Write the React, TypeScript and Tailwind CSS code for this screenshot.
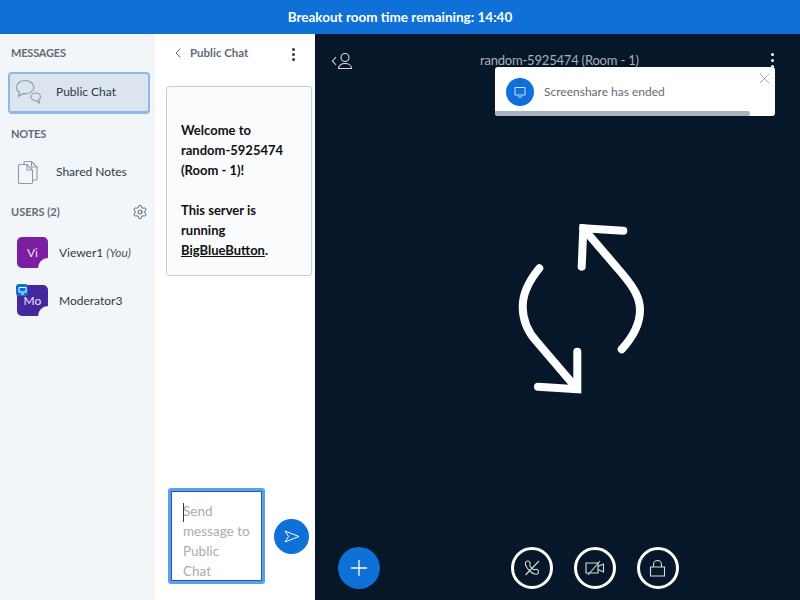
import { ChevronLeft, Plus, Settings, X } from 'lucide-react';

const FONT = "font-['Lato','Noto_Sans',sans-serif]";

function ChatIcon() {
  return (
    <svg width="28" height="26" viewBox="0 0 28 26" fill="none" stroke="#8b9aa8" strokeWidth="1.1">
      <path d="M10 1.5c5 0 8.800 3 8.800 6.700s-3.800 6.700-8.800 6.700c-.8 0-1.500 0-2.200-.2L3.500 17.500l1-4.200C2.600 12 1.500 10.200 1.500 8.200 1.500 4.500 5.200 1.500 10 1.500z" />
      <path d="M20.500 14c2.800 0 5 1.600 5 3.700 0 1.200-.7 2.200-1.800 2.900l.6 3.400-3.200-2.400c-2.800 0-5-1.700-5-3.900 0-2 2-3.700 4.400-3.700z" />
    </svg>
  );
}

function NotesIcon() {
  return (
    <svg width="22" height="25" viewBox="0 0 22 25" fill="none" stroke="#8b9aa8" strokeWidth="1.1">
      <path d="M7 4V2.500C7 1.900 7.500 1.500 8 1.500h6.500l5.500 5.500v12c0 .6-.4 1-1 1h-3" />
      <path d="M14.500 1.500V7H20" />
      <path d="M2.500 4.500H10l5.500 5.500v12.500c0 .6-.4 1-1 1h-12c-.6 0-1-.4-1-1v-17c0-.6.400-1 1-1z" />
      <path d="M10 4.500V10h5.500" />
    </svg>
  );
}

function Avatar({ label, color, presenter }: { label: string; color: string; presenter?: boolean }) {
  return (
    <div className={`relative flex h-[31px] w-[31px] items-center justify-center overflow-visible rounded-[5px] text-[12px] text-[#e8e0f0] ${color}`}>
      {label}
      <span className="absolute bottom-0 right-0 h-[10px] w-[10px] rounded-tl-full bg-[#f3f6f9]" />
      {presenter && (
        <span className="absolute -left-[1px] -top-[1px] flex h-[12px] w-[12px] items-center justify-center rounded-[3px] bg-[#0f70d7]">
          <svg width="9" height="9" viewBox="0 0 9 9" fill="none" stroke="#fff" strokeWidth="1">
            <path d="M1 1.500h7v4.500H1z" />
            <path d="M3 8h3" />
          </svg>
        </span>
      )}
    </div>
  );
}

function RoundButton({ children }: { children: React.ReactNode }) {
  return (
    <button className="flex h-[42px] w-[42px] items-center justify-center rounded-full border-[3px] border-white bg-transparent">
      {children}
    </button>
  );
}

function Kebab({ color, gap }: { color: string; gap: string }) {
  return (
    <div className={`flex flex-col ${gap}`}>
      <span className={`h-[3px] w-[3px] rounded-full ${color}`} />
      <span className={`h-[3px] w-[3px] rounded-full ${color}`} />
      <span className={`h-[3px] w-[3px] rounded-full ${color}`} />
    </div>
  );
}

export default function App() {
  return (
    <div className={`flex h-[600px] w-[800px] flex-col overflow-hidden ${FONT}`}>
      <div className="flex h-[34px] shrink-0 items-center justify-center bg-[#0f70d7] text-[13.5px] font-bold text-white">
        Breakout room time remaining: 14:40
      </div>

      <div className="flex min-h-0 flex-1">
        {/* user list */}
        <div className="flex w-[155px] shrink-0 flex-col bg-[#f3f6f9] pt-[11px] text-[12px] text-[#2d3a47]">
          <h2 className="pl-[11px] text-[11px] font-bold leading-[15px] tracking-[-0.2px] text-[#5f6b78]">MESSAGES</h2>
          <div className="ml-[8px] mt-[12px] flex h-[42px] w-[142px] items-center rounded-[4px] border-2 border-b-[3px] border-[#8cb8ea] bg-[#dce4ed] pb-[1px] pl-[5px]">
            <ChatIcon />
            <span className="ml-[13px]">Public Chat</span>
          </div>
          <h2 className="mt-[12px] pl-[11px] text-[11px] font-bold leading-[15px] tracking-[-0.2px] text-[#5f6b78]">NOTES</h2>
          <div className="mt-[18px] flex h-[26px] items-center pl-[17px]">
            <NotesIcon />
            <span className="ml-[17px]">Shared Notes</span>
          </div>
          <div className="mt-[18px] flex h-[18px] items-center justify-between pl-[11px] pr-[7px]">
            <h2 className="text-[11px] font-bold text-[#5f6b78]">USERS (2)</h2>
            <Settings size={16} strokeWidth={1.3} color="#3e4b58" />
          </div>
          <div className="mt-[16px] flex items-center pl-[17px]">
            <Avatar label="Vi" color="bg-[#7b1fa2]" />
            <span className="ml-[11px]">
              Viewer1 <em className="text-[#4a5663]">(You)</em>
            </span>
          </div>
          <div className="mt-[17px] flex items-center pl-[17px]">
            <Avatar label="Mo" color="bg-[#4527a0]" presenter />
            <span className="ml-[11px]">Moderator3</span>
          </div>
        </div>

        {/* chat */}
        <div className="flex w-[160px] shrink-0 flex-col bg-white">
          <div className="flex h-[52px] shrink-0 items-start pl-[15px] pr-[20px] pt-[11px]">
            <ChevronLeft size={16} strokeWidth={1.5} color="#5f6b78" />
            <span className="ml-[4px] text-[11.5px] font-bold leading-[16px] text-[#5f6b78]">Public Chat</span>
            <div className="ml-auto mt-[3px]">
              <Kebab color="bg-[#2d3a47]" gap="gap-[2px]" />
            </div>
          </div>
          <div className="ml-[11px] h-[190px] w-[146px] rounded-[3px] border border-[#c5ced8] bg-[#fafbfc] px-[14px] pt-[33px] text-[13px] font-bold leading-[20px] text-[#111]">
            <p>Welcome to random-5925474 (Room - 1)!</p>
            <p className="mt-[20px]">
              This server is running <u>BigBlueButton</u>.
            </p>
          </div>
          <div className="mt-auto flex items-center pb-[16px] pl-[13px]">
            <div className="h-[96px] w-[97px] overflow-hidden rounded-[3px] border-[3px] border-[#5ba0ea] bg-white">
              <div className="relative h-full border border-[#1a5fae] pl-[11px] pt-[9px] text-[13.5px] leading-[20px] text-[#a5adb6]">
                <span className="absolute left-[11px] top-[11px] h-[19px] w-[1px] bg-[#2d3a47]" />
                Send
                <br />
                message to
                <br />
                Public
                <br />
                Chat
              </div>
            </div>
            <button className="ml-[9px] flex h-[35px] w-[35px] items-center justify-center rounded-full bg-[#0f70d7]">
              <svg width="16" height="13" viewBox="0 0 16 13" fill="none" stroke="#fff" strokeWidth="1">
                <path d="M1 1l14 5.500L1 12l3.500-5.500L1 1z" />
              </svg>
            </button>
          </div>
        </div>

        {/* presentation */}
        <div className="relative flex min-w-0 flex-1 flex-col bg-[#06172a]">
          <div className="flex h-[54px] shrink-0 items-center pl-[16px] pr-[26px]">
            <svg width="22" height="18" viewBox="0 0 22 18" fill="none" stroke="#d7dce2" strokeWidth="1.100">
              <path d="M5 5L1.500 9 5 13" />
              <circle cx="14" cy="5.500" r="4" />
              <path d="M7.500 16.500c0-3 2.800-5 6.500-5s6.500 2 6.500 5z" />
            </svg>
            <span className="ml-[127px] text-[13px] tracking-[-0.2px] text-[#a9b1ba]">random-5925474 (Room - 1)</span>
            <div className="ml-auto mt-[-1px]">
              <Kebab color="bg-white" gap="gap-[3px]" />
            </div>
          </div>

          <div className="flex min-h-0 flex-1 items-center justify-center">
            <svg width="130" height="173" viewBox="515 222 130 173" fill="none" stroke="#fff" strokeWidth="8" strokeLinecap="round" className="ml-[45px] mt-[-18px]">
              <path d="M581.700 266.700L583.300 228.300L623.300 230.700" />
              <path d="M583.300 228.300L623.300 275C634 288 640 298 640 310C640 325 633 337 621.700 349.300" />
              <path d="M539.300 268.300C528 282 522.700 295 522.700 306.700C522.700 320 528 332 536.700 341.700L576.700 388.300" />
              <path d="M538 386.700L577.300 389.300L577.300 351.700" />
            </svg>
          </div>

          <div className="relative flex h-[54px] shrink-0 items-start justify-center gap-[21px] pl-[74px] pt-[1px]">
            <button className="absolute left-[23px] top-[1px] flex h-[42px] w-[42px] items-center justify-center rounded-full bg-[#0f70d7]">
              <Plus size={26} strokeWidth={1.2} color="#fff" />
            </button>
            <RoundButton>
              <svg width="18" height="18" viewBox="0 0 18 18" fill="none" stroke="#d7dce2" strokeWidth="1.100">
                <path d="M2.500 16L16 2" />
                <path d="M2.500 3.500C3.500 1.500 6 1.500 7 3.500c.6 1.500-.5 2.500 0 3.500.8 1.500 2.500 3 3.500 3.500 1.200.4 2-.4 3.500 0 2 .7 2 3.500.2 4.500-2 1-4.500-.5-6.700-2.300C5 10.500 1.500 6 2.500 3.500z" />
              </svg>
            </RoundButton>
            <RoundButton>
              <svg width="20" height="16" viewBox="0 0 20 16" fill="none" stroke="#d7dce2" strokeWidth="1.100">
                <path d="M1 3h12v10H1z" />
                <path d="M13 6.500L18.500 4v8L13 9.500" />
                <path d="M3 15L15 1" />
              </svg>
            </RoundButton>
            <RoundButton>
              <svg width="17" height="18" viewBox="0 0 17 18" fill="none" stroke="#d7dce2" strokeWidth="1.100">
                <path d="M1.500 8h14v9h-14z" />
                <path d="M4.500 8V5.500a4 4 0 0 1 8 0V8" />
              </svg>
            </RoundButton>
          </div>

          {/* toast */}
          <div className="absolute left-[180px] top-[33px] h-[49px] w-[280px] overflow-hidden rounded-[3px] bg-white">
            <div className="flex items-center pl-[11px] pt-[11px]">
              <span className="flex h-[28px] w-[28px] items-center justify-center rounded-full bg-[#0f70d7]">
                <svg width="12" height="12" viewBox="0 0 12 12" fill="none" stroke="#cfe2f7" strokeWidth="1">
                  <path d="M1 1.500h10v7.500H1z" />
                  <path d="M4 11h4" />
                </svg>
              </span>
              <span className="ml-[10px] text-[12px] text-[#5f6b78]">Screenshare has ended</span>
            </div>
            <X size={17} strokeWidth={0.9} color="#6b7885" className="absolute right-[2px] top-[3px]" />
            <div className="absolute bottom-0 left-0 h-[5px] w-[255px] rounded-r-[2px] bg-[#a7b3bd]" />
          </div>
        </div>
      </div>
    </div>
  );
}
